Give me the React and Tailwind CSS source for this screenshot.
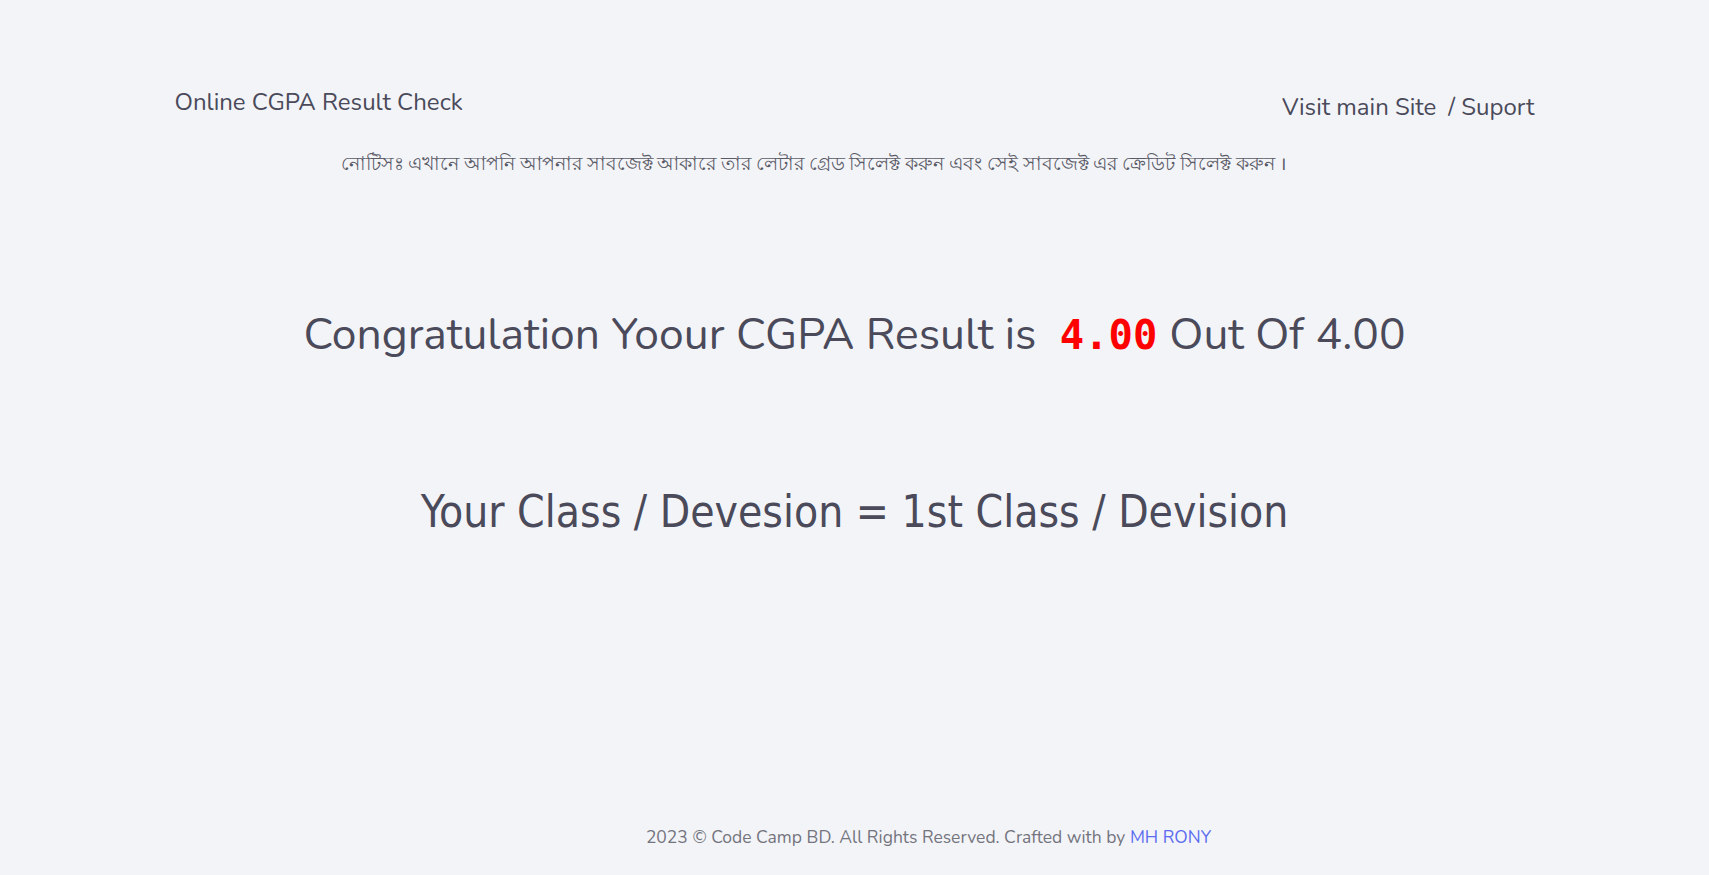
export default function App() {
  return (
    <div className="min-h-screen bg-[#f3f4f8] text-[#4a4a5a] flex flex-col font-['Nunito','Noto_Sans',sans-serif]">
      {/* Header */}
      <header className="w-full max-w-[1360px] mx-auto pt-[87px]">
        <div className="flex items-start justify-between">
          <h1 className="text-[24px] leading-[30px]">Online CGPA Result Check</h1>
          <div className="text-[24px] leading-[30px] pt-[5px]">
            <a href="#" className="mr-3">Visit main Site</a>
            <a href="#">/ Suport</a>
          </div>
        </div>
        <p className="mt-[29px] pl-[166px] text-[18.5px] leading-[26px] text-[#5a5a66]">
          নোটিসঃ এখানে আপনি আপনার সাবজেক্ট আকারে তার লেটার গ্রেড সিলেক্ট করুন এবং সেই সাবজেক্ট এর ক্রেডিট সিলেক্ট করুন ।
        </p>
      </header>

      {/* Result */}
      <main className="flex-1 flex flex-col items-center">
        <h2 className="mt-[130px] text-[44.4px] leading-[56px]">
          Congratulation Yoour CGPA Result is{" "}
          <span className="font-['DejaVu_Sans_Mono',monospace] font-bold text-[40.5px] text-[#ff0000] ml-[12px] mr-[12px]">4.00</span>
          Out Of 4.00
        </h2>
        <h2 className="mt-[121px] text-[44px] leading-[56px] font-['Liberation_Sans_Narrow','DejaVu_Sans_Condensed',sans-serif]">
          Your Class / Devesion = 1st Class / Devision
        </h2>
      </main>

      {/* Footer */}
      <footer className="pb-[25px] pl-[148px] text-center text-[17.5px] leading-[26px] text-[#74747e]">
        2023 © Code Camp BD. All Rights Reserved. Crafted with by{" "}
        <a href="#" className="text-[#5b6cf0]">MH RONY</a>
      </footer>
    </div>
  );
}
